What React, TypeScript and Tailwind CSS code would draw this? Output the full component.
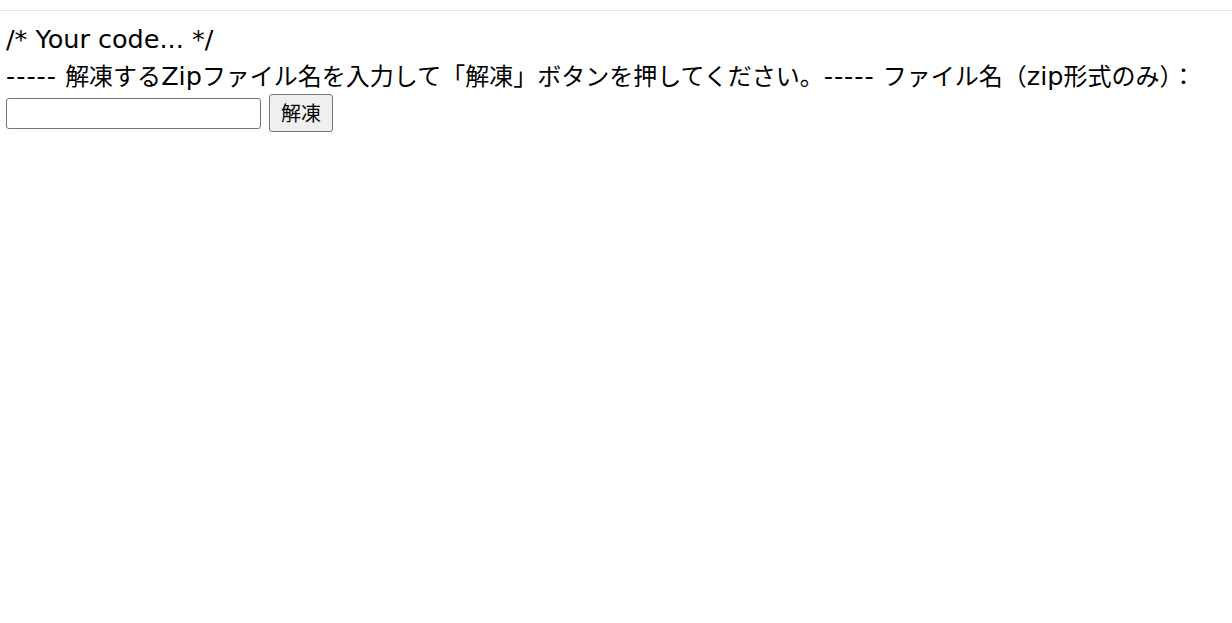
function Lat({ children, dash }: { children: React.ReactNode; dash?: boolean }) {
  return (
    <span className={dash ? "text-[25.5px] tracking-[1px]" : "text-[25.5px]"}>
      {children}
    </span>
  );
}

export default function App() {
  return (
    <div className="min-h-screen bg-white text-black [font-family:'DejaVu_Sans','Noto_Sans_CJK_JP',sans-serif]">
      <div className="mt-[10px] border-t border-[#e3e3e3] px-[6px] pt-[10px]">
        <p className="text-[24px] leading-[36px]">
          <Lat>/* Your code... */</Lat>
        </p>
        <p className="text-[24px] leading-[36px] whitespace-nowrap">
          <Lat dash>-----</Lat>
          <Lat> </Lat>解凍する<Lat>Zip</Lat>ファイル名を入力して「解凍」ボタンを押してください。
          <Lat dash>-----</Lat>
          <Lat> </Lat>ファイル名（<Lat>zip</Lat>形式のみ）：
        </p>
        <div className="-mt-[1px] flex items-center gap-[8px]">
          <input
            type="text"
            className="h-[31px] w-[255px] rounded-[3px] border border-[#767676] bg-white px-1 text-[18px]"
          />
          <button
            type="button"
            className="h-[38px] w-[64px] rounded-[3px] border border-[#767676] bg-[#efefef] text-[20px] leading-none [font-family:'Noto_Sans_CJK_JP',sans-serif]"
          >
            解凍
          </button>
        </div>
      </div>
    </div>
  );
}
